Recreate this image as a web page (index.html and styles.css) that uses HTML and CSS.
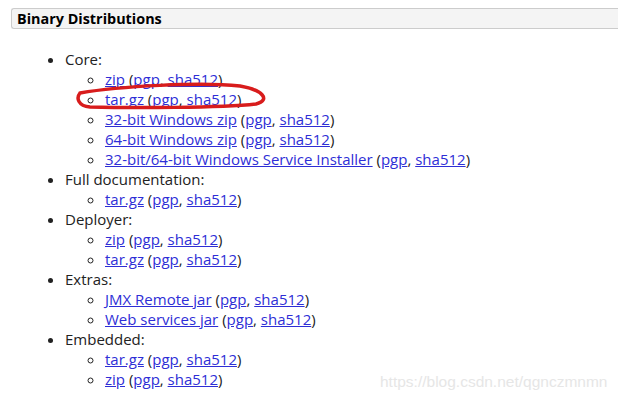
FILE: index.html
```html
<!doctype html>
<html lang="en">
    <head>
        <meta charset="UTF-8" />
        <meta name="viewport" content="width=device-width, initial-scale=1.0" />
        <title>Binary Distributions</title>
        <link rel="stylesheet" href="styles.css">
    </head>
    <body>
        <h3 class="section-title">Binary Distributions</h3>

        <ul class="dist-list">
            <li>
                Core:
                <ul>
                    <li><a href="#">zip</a> (<a href="#">pgp</a>, <a href="#">sha512</a>)</li>
                    <li><a href="#">tar.gz</a> (<a href="#">pgp</a>, <a href="#">sha512</a>)</li>
                    <li><a href="#">32-bit Windows zip</a> (<a href="#">pgp</a>, <a href="#">sha512</a>)</li>
                    <li><a href="#">64-bit Windows zip</a> (<a href="#">pgp</a>, <a href="#">sha512</a>)</li>
                    <li><a href="#">32-bit/64-bit Windows Service Installer</a> (<a href="#">pgp</a>, <a href="#">sha512</a>)</li>
                </ul>
            </li>
            <li>
                Full documentation:
                <ul>
                    <li><a href="#">tar.gz</a> (<a href="#">pgp</a>, <a href="#">sha512</a>)</li>
                </ul>
            </li>
            <li>
                Deployer:
                <ul>
                    <li><a href="#">zip</a> (<a href="#">pgp</a>, <a href="#">sha512</a>)</li>
                    <li><a href="#">tar.gz</a> (<a href="#">pgp</a>, <a href="#">sha512</a>)</li>
                </ul>
            </li>
            <li>
                Extras:
                <ul>
                    <li><a href="#">JMX Remote jar</a> (<a href="#">pgp</a>, <a href="#">sha512</a>)</li>
                    <li><a href="#">Web services jar</a> (<a href="#">pgp</a>, <a href="#">sha512</a>)</li>
                </ul>
            </li>
            <li>
                Embedded:
                <ul>
                    <li><a href="#">tar.gz</a> (<a href="#">pgp</a>, <a href="#">sha512</a>)</li>
                    <li><a href="#">zip</a> (<a href="#">pgp</a>, <a href="#">sha512</a>)</li>
                </ul>
            </li>
        </ul>

        <!-- hand-drawn marker around the tar.gz line -->
        <svg class="marker" width="618" height="399" viewBox="0 0 618 399">
            <path d="M 80 93 C 120 86, 200 82, 240 86 C 263 90, 271 100, 256 104 C 220 108, 130 108, 90 107 C 78 106, 76 98, 80 93" fill="none" stroke="#d81c1c" stroke-width="3.5" stroke-linecap="round" />
        </svg>

        <div class="watermark">https://blog.csdn.net/qgnczmnmn</div>
    </body>
</html>
```

FILE: styles.css
```css
html,
body {
    margin: 0;
    padding: 0;
}
body {
    font-family: "Open Sans", "Liberation Sans", sans-serif;
    font-size: 15px;
    line-height: 20px;
    color: #222;
    background-color: #fff;
    padding: 8px 0 0 11px;
    position: relative;
    width: 607px;
    height: 391px;
    overflow: hidden;
}
.section-title {
    margin: 0;
    font-size: 14.4px;
    font-weight: bold;
    line-height: 19px;
    padding: 0 5px;
    background-color: #f4f4f4;
    border: 1px solid #ccc;
    border-right: none;
    border-radius: 3px 0 0 3px;
    color: #000;
}
.dist-list {
    margin: 20px 0 0 0;
    padding: 0 0 0 54px;
    list-style: disc;
}
.dist-list ul {
    margin: 0;
    padding: 0 0 0 40px;
    list-style: circle;
}
a {
    color: #2e2ed6;
    text-decoration: underline;
}
.marker {
    position: absolute;
    left: 0;
    top: 0;
    pointer-events: none;
}
.watermark {
    position: absolute;
    left: 380px;
    top: 372px;
    font-family: "Liberation Sans", Arial, sans-serif;
    font-size: 15.5px;
    color: #e6e6e6;
}
```
